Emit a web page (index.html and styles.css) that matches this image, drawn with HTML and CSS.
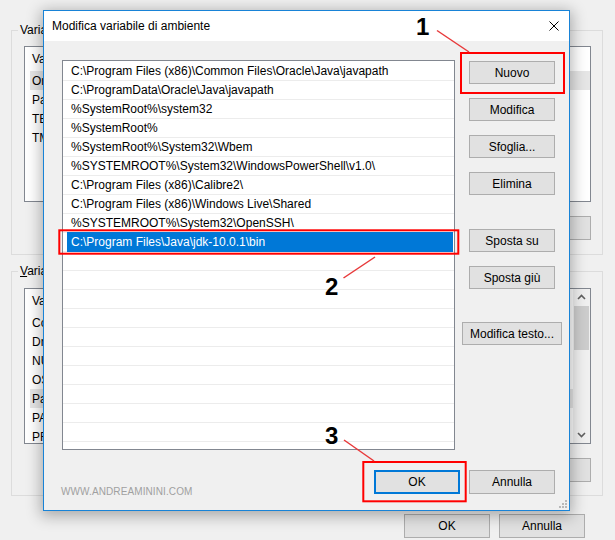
FILE: index.html
```html
<!DOCTYPE html>
<html lang="it">
<head>
  <meta charset="UTF-8" />
  <title>Modifica variabile di ambiente</title>
  <link rel="stylesheet" href="styles.css">
</head>
<body>
  <div class="window">
    <fieldset class="group">
      <legend>Variabili</legend>
      <div class="listview lv-user">
        <div class="lv-head">Variabile</div>
        <div class="lv-row picked">OneDrive</div>
        <div class="lv-row">Path</div>
        <div class="lv-row">TEMP</div>
        <div class="lv-row">TMP</div>
      </div>
      <div class="group-buttons">
        <button class="btn">Nuova...</button>
        <button class="btn">Modifica...</button>
        <button class="btn">Elimina</button>
      </div>
    </fieldset>

    <fieldset class="group group-system">
      <legend><u>V</u>ariabili</legend>
      <div class="listview lv-system">
        <div class="lv-body">
          <div class="lv-head">Variabile</div>
          <div class="lv-row">ComSpec</div>
          <div class="lv-row">DriverData</div>
          <div class="lv-row">NUMBER</div>
          <div class="lv-row">OS</div>
          <div class="lv-row picked">Path</div>
          <div class="lv-row">PATHEXT</div>
          <div class="lv-row">PROCESSOR</div>
        </div>
        <div class="scrollbar">
          <svg class="sb-arrow" width="17" height="17" viewBox="0 0 17 17"><polyline points="5,10 8.5,6.5 12,10" fill="none" stroke="#606060" stroke-width="1.6"/></svg>
          <div class="sb-thumb"></div>
          <div class="sb-track"></div>
          <svg class="sb-arrow" width="17" height="17" viewBox="0 0 17 17"><polyline points="5,7 8.5,10.5 12,7" fill="none" stroke="#606060" stroke-width="1.6"/></svg>
        </div>
      </div>
      <div class="group-buttons group-buttons-low">
        <button class="btn">Nuova...</button>
        <button class="btn">Modifica...</button>
        <button class="btn">Elimina</button>
      </div>
    </fieldset>

    <div class="window-footer">
      <button class="btn">OK</button>
      <button class="btn">Annulla</button>
    </div>
  </div>

  <div class="dialog">
    <div class="titlebar">
      <span class="title">Modifica variabile di ambiente</span>
      <svg class="close" width="10" height="10" viewBox="0 0 10 10"><path d="M0.5 0.5 L9.5 9.5 M9.5 0.5 L0.5 9.5" stroke="#000" stroke-width="1"/></svg>
    </div>

    <div class="dialog-body">
      <div class="path-list">
        <div class="row">C:\Program Files (x86)\Common Files\Oracle\Java\javapath</div>
        <div class="row">C:\ProgramData\Oracle\Java\javapath</div>
        <div class="row">%SystemRoot%\system32</div>
        <div class="row">%SystemRoot%</div>
        <div class="row">%SystemRoot%\System32\Wbem</div>
        <div class="row">%SYSTEMROOT%\System32\WindowsPowerShell\v1.0\</div>
        <div class="row">C:\Program Files (x86)\Calibre2\</div>
        <div class="row">C:\Program Files (x86)\Windows Live\Shared</div>
        <div class="row">%SYSTEMROOT%\System32\OpenSSH\</div>
        <div class="row editing"><span class="edit">C:\Program Files\Java\jdk-10.0.1\bin</span></div>
        <div class="row"></div>
        <div class="row"></div>
        <div class="row"></div>
        <div class="row"></div>
        <div class="row"></div>
        <div class="row"></div>
        <div class="row"></div>
        <div class="row"></div>
        <div class="row"></div>
        <div class="row"></div>
      </div>

      <div class="side-buttons">
        <button class="btn">Nuovo</button>
        <button class="btn">Modifica</button>
        <button class="btn">Sfoglia...</button>
        <button class="btn">Elimina</button>
        <button class="btn spaced">Sposta su</button>
        <button class="btn">Sposta giù</button>
        <button class="btn wide spaced-sm">Modifica testo...</button>
      </div>
    </div>

    <div class="dialog-footer">
      <span class="watermark">WWW.ANDREAMININI.COM</span>
      <div class="footer-buttons">
        <button class="btn btn-default">OK</button>
        <button class="btn">Annulla</button>
      </div>
    </div>

    <svg class="grip" width="10" height="10" viewBox="0 0 10 10" fill="#b8b8b8">
      <rect x="7" y="1" width="2" height="2"/>
      <rect x="4" y="4" width="2" height="2"/><rect x="7" y="4" width="2" height="2"/>
      <rect x="1" y="7" width="2" height="2"/><rect x="4" y="7" width="2" height="2"/><rect x="7" y="7" width="2" height="2"/>
    </svg>
  </div>

  <!-- annotations -->
  <svg class="marks" width="615" height="540" viewBox="0 0 615 540">
    <g fill="none" stroke="#ff0000" stroke-width="2">
      <rect x="461" y="53" width="103" height="40"/>
      <rect x="59.3" y="230.3" width="399" height="23.4"/>
      <rect x="363.3" y="462" width="102.4" height="39.3"/>
    </g>
    <g stroke="#e8393a" stroke-width="1.5">
      <line x1="437" y1="30.5" x2="469" y2="52"/>
      <line x1="343.5" y1="278" x2="375" y2="257"/>
      <line x1="344" y1="440" x2="374" y2="461"/>
    </g>
  </svg>
  <span class="step step-1">1</span>
  <span class="step step-2">2</span>
  <span class="step step-3">3</span>
</body>
</html>
```

FILE: styles.css
```css
body {
  margin: 0;
  width: 615px;
  height: 540px;
  overflow: hidden;
  position: relative;
  background: #f0f0f0;
  font-family: 'Liberation Sans', Arial, sans-serif;
  font-size: 12px;
  color: #000;
}

/* window behind the dialog */

.window {
  padding: 22px 12px 0 11px;
}

.group {
  margin: 0;
  min-width: 0;
  border: 1px solid #dcdcdc;
  padding: 8px 11px 14px 12px;
}

.group legend {
  margin-left: -6px;
  padding: 0 2px;
  line-height: 16px;
}

.group-system {
  margin-top: 8px;
  padding-top: 9px;
  padding-bottom: 13px;
}

.listview {
  box-sizing: border-box;
  height: 156px;
  background: #fff;
  border: 1px solid #828790;
  overflow: hidden;
}

.lv-system {
  display: flex;
}

.lv-body {
  flex: 1;
}

.lv-head {
  display: flex;
  height: 24px;
  align-items: center;
  padding-left: 7px;
  white-space: nowrap;
}

.lv-row {
  display: flex;
  height: 19px;
  align-items: center;
  margin-left: 5px;
  padding-left: 2px;
  white-space: nowrap;
}

.lv-row.picked {
  background: #e6e6e6;
}

.scrollbar {
  width: 17px;
  display: flex;
  flex-direction: column;
  background: #f0f0f0;
}

.sb-arrow {
  display: block;
  flex-shrink: 0;
}

.sb-thumb {
  height: 44px;
  margin: 0 1px;
  background: #cdcdcd;
}

.sb-track {
  flex: 1;
}

.group-buttons {
  display: flex;
  justify-content: flex-end;
  gap: 9px;
  margin-top: 14px;
}

.btn {
  box-sizing: border-box;
  width: 86px;
  height: 24px;
  padding: 0;
  background: #e1e1e1;
  border: 1px solid #adadad;
  border-radius: 0;
  font-family: inherit;
  font-size: 12px;
  color: #000;
}

.window-footer {
  display: flex;
  justify-content: flex-end;
  gap: 9px;
  margin-top: 18px;
  padding-right: 18px;
}

/* dialog */

.dialog {
  position: absolute;
  left: 43px;
  top: 10px;
  box-sizing: border-box;
  width: 527px;
  height: 501px;
  background: #f0f0f0;
  border: 1px solid #1883d7;
  box-shadow: 0 3px 14px 2px rgba(0, 0, 0, 0.3);
}

.titlebar {
  display: flex;
  align-items: center;
  justify-content: space-between;
  height: 30px;
  padding: 0 10px 0 8px;
  background: #fff;
}

.close {
  display: block;
}

.dialog-body {
  display: flex;
  padding: 19px 0 0 18px;
}

.path-list {
  box-sizing: border-box;
  width: 393px;
  height: 390px;
  padding-top: 1px;
  background: #fff;
  border: 1px solid #828790;
  overflow: hidden;
}

.row {
  display: flex;
  align-items: center;
  height: 18px;
  padding-left: 8px;
  border-bottom: 1px solid #ececec;
  white-space: nowrap;
}

.row.editing {
  padding-left: 0;
}

.edit {
  flex: 1;
  align-self: stretch;
  display: flex;
  align-items: center;
  margin: -1px 1px -1px 4px;
  padding-left: 4px;
  background: #0078d7;
  color: #fff;
}

.side-buttons {
  width: 100px;
  margin-left: 7px;
  padding-top: 1px;
  display: flex;
  flex-direction: column;
  align-items: center;
  gap: 14px;
}

.side-buttons .btn {
  height: 23px;
}

.side-buttons .wide {
  width: 100px;
}

.side-buttons .spaced {
  margin-top: 20px;
}

.side-buttons .spaced-sm {
  margin-top: 19px;
}

.dialog-footer {
  display: flex;
  justify-content: space-between;
  align-items: flex-start;
  margin-top: 20px;
  padding: 0 14px 0 17px;
}

.watermark {
  padding-top: 16px;
  font-size: 10px;
  line-height: 12px;
  letter-spacing: 0.1px;
  color: #a0a0a0;
}

.footer-buttons {
  display: flex;
  gap: 9px;
}

.btn-default {
  border: 2px solid #0078d7;
}

.grip {
  position: absolute;
  right: 1px;
  bottom: 1px;
}

/* annotations */

.marks {
  position: absolute;
  left: 0;
  top: 0;
  pointer-events: none;
}

.step {
  position: absolute;
  font-family: 'Liberation Sans', Arial, sans-serif;
  font-weight: bold;
  font-size: 24px;
  line-height: 24px;
  color: #000;
}

.step-1 {
  left: 416px;
  top: 15px;
}

.step-2 {
  left: 325px;
  top: 275px;
}

.step-3 {
  left: 325px;
  top: 424px;
}
```
